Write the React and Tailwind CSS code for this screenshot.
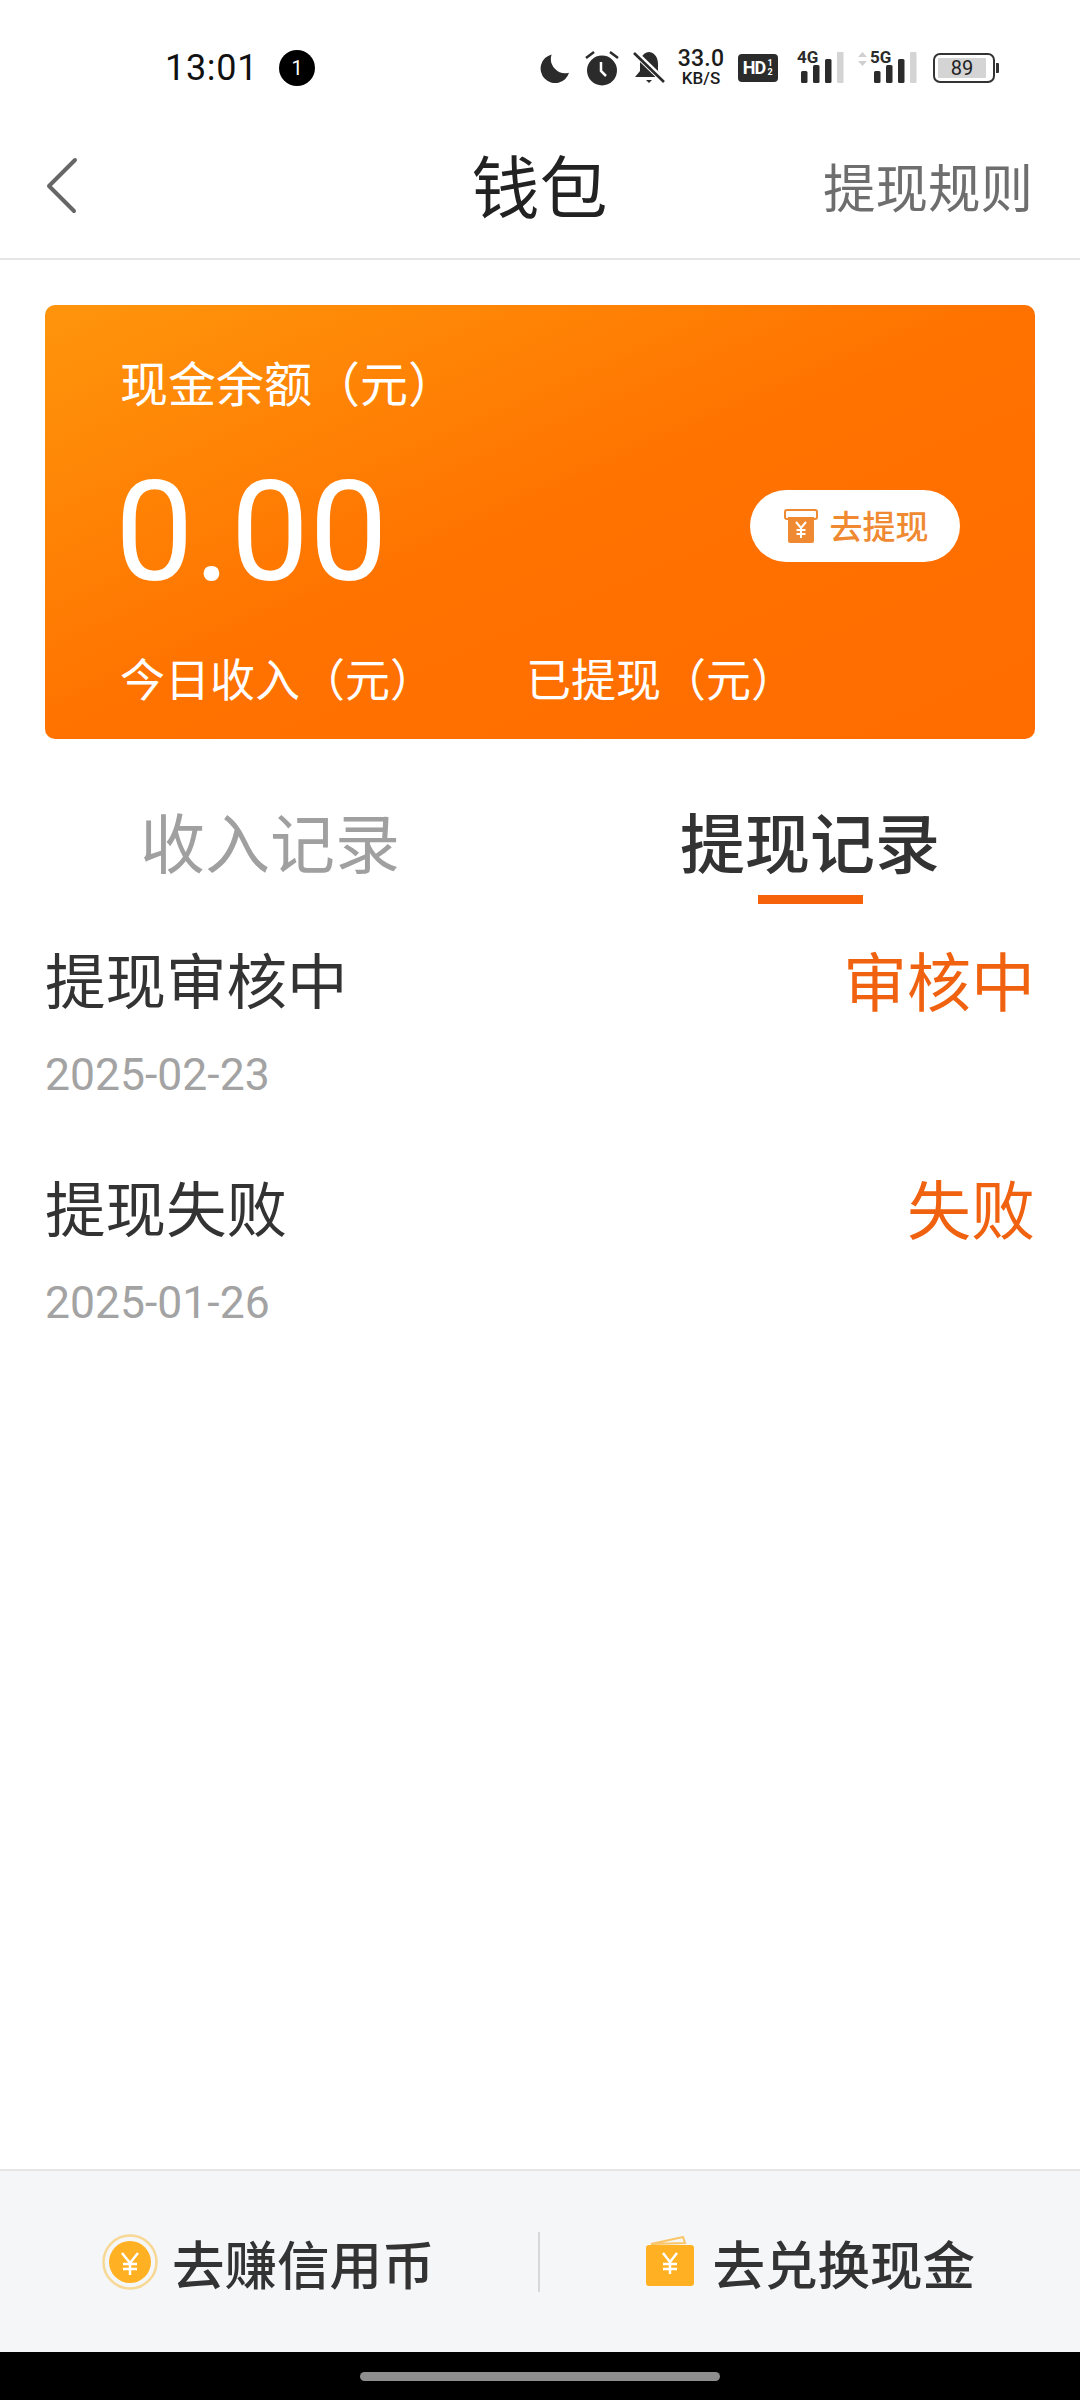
const cjk = { fontFamily: '"Noto Sans CJK SC", Roboto, sans-serif' };

function Bars() {
  return (
    <svg width="44" height="32" viewBox="0 0 44 32">
      <rect x="0" y="19" width="6.5" height="12" rx="1.5" fill="#2b2b2b" />
      <rect x="12" y="13" width="6.5" height="18" rx="1.5" fill="#2b2b2b" />
      <rect x="24" y="7" width="6.5" height="24" rx="1.5" fill="#2b2b2b" />
      <rect x="36" y="0" width="6.5" height="31" rx="1" fill="#d4d4d4" />
    </svg>
  );
}

function StatusBar() {
  return (
    <div className="h-[130px] flex items-center pl-[165px] pr-[81px] pt-[6px] text-[#111]" style={{ fontFamily: 'Roboto, sans-serif' }}>
      <span className="text-[36px] leading-none tracking-[0.7px] w-[112px]">13:01</span>
      <span className="ml-[2px] w-[36px] h-[36px] rounded-full bg-black text-white text-[20px] flex items-center justify-center">1</span>
      <div className="ml-auto flex items-center">
        <svg width="31" height="32" viewBox="0 0 32 32"><path d="M13 2 A15 15 0 1 0 31 21 A15 15 0 0 1 13 2Z" fill="#2b2b2b" /></svg>
        <svg className="ml-[15px]" width="34" height="36" viewBox="0 0 34 36">
          <circle cx="17" cy="20.5" r="15" fill="#2b2b2b" />
          <path d="M16 12 V21 L21 26" stroke="#fff" strokeWidth="2.5" fill="none" />
          <path d="M1 8 L9 2 M33 8 L25 2" stroke="#2b2b2b" strokeWidth="2.5" />
        </svg>
        <svg className="ml-[14px]" width="32" height="36" viewBox="0 0 32 36">
          <path d="M16 2 C9 3 7 9 7 14 V21 L2 27 H30 L25 21 V14 C25 9 23 3 16 2Z" fill="#2b2b2b" />
          <path d="M13 30 H19 L16 33Z" fill="#2b2b2b" />
          <path d="M1 2 L31 31" stroke="#fff" strokeWidth="6" />
          <path d="M1 3 L31 32" stroke="#2b2b2b" strokeWidth="2.6" />
        </svg>
        <div className="ml-[10px] w-[52px] flex flex-col items-center text-[#1c1c1c] font-medium">
          <span className="text-[23px] leading-[21px] tracking-[0.2px]">33.0</span>
          <span className="text-[17px] leading-[19px]">KB/S</span>
        </div>
        <div className="ml-[11px] w-[40px] h-[28px] rounded-[4px] bg-[#2b2b2b] text-white text-[18px] leading-none font-bold flex items-center justify-center tracking-[-1px]">HD<span className="text-[9px] leading-[9px] w-[7px] text-center ml-[1px]">1<br />2</span></div>
        <div className="ml-[19px] relative w-[46px] h-[32px]">
          <span className="absolute left-0 -top-[3px] text-[17px] font-bold text-[#2b2b2b] leading-none">4G</span>
          <div className="absolute left-[4px] bottom-0"><Bars /></div>
        </div>
        <div className="ml-[15px] relative w-[60px] h-[32px]">
          <svg className="absolute left-0 top-0" width="9" height="14" viewBox="0 0 9 14"><path d="M4.5 0 L9 5 H0Z M4.5 14 L9 9 H0Z" fill="#d0d0d0" /></svg>
          <span className="absolute left-[12px] -top-[3px] text-[17px] font-bold text-[#2b2b2b] leading-none">5G</span>
          <div className="absolute left-[16px] bottom-0"><Bars /></div>
        </div>
        <div className="ml-[15px] w-[62px] h-[30px] rounded-[7px] border-2 border-[#333] p-[3px] flex">
          <div className="w-[48px] bg-[#d4d4d4] rounded-[1px] text-[20px] leading-[20px] text-[#222] text-center">89</div>
        </div>
        <div className="ml-[1px] w-[3px] h-[10px] bg-[#333] rounded-r-[1px]" />
      </div>
    </div>
  );
}

function Header() {
  return (
    <div className="h-[130px] relative flex items-center justify-center border-b-2 border-[#e5e5e5] box-border" style={cjk}>
      <svg className="absolute left-[45px] top-[27px]" width="34" height="58" viewBox="0 0 34 58">
        <path d="M30 3 L4 29 L29 54" stroke="#666" strokeWidth="4" strokeLinecap="round" strokeLinejoin="round" fill="none" />
      </svg>
      <span className="text-[68px] leading-none text-[#222] -mt-[20px] -ml-[1px]">钱包</span>
      <span className="absolute right-[47px] top-[25px] text-[52.5px] leading-[60px] text-[#6e6e6e]">提现规则</span>
    </div>
  );
}

function Card() {
  return (
    <div className="mx-[45px] mt-[45px] h-[434px] rounded-[10px] bg-gradient-to-br from-[#ff950c] via-[#ff7200] to-[#ff6c00] text-white pl-[75px] pr-[75px] flex flex-col" style={cjk}>
      <div className="mt-[46px] text-[48px] leading-[60px]">现金余额（元）</div>
      <div className="flex items-center justify-between mt-[50px] h-[130px]">
        <span className="text-[140px] leading-none -ml-[5px] mt-[12px]" style={{ fontFamily: 'Roboto, sans-serif' }}>0.00</span>
        <div className="w-[210px] h-[72px] rounded-full bg-white flex items-center justify-center gap-[12px] text-[#f08a32] text-[33px] font-medium">
          <svg className="ml-[2px]" width="34" height="36" viewBox="0 0 34 36">
            <rect x="1" y="2" width="32" height="9" rx="2" fill="none" stroke="#f08a32" strokeWidth="2" />
            <path d="M4 9 H30 V33 a2 2 0 0 1 -2 2 H6 a2 2 0 0 1 -2 -2Z" fill="#f08a32" />
            <path d="M12 14 L17 20 L22 14 M17 20 V30 M12.5 22 H21.5 M12.5 26 H21.5" stroke="#fff" strokeWidth="2" fill="none" />
          </svg>
          <span>去提现</span>
        </div>
      </div>
      <div className="mt-[57px] flex text-[45px] leading-[60px]">
        <span className="w-[406px]">今日收入（元）</span>
        <span>已提现（元）</span>
      </div>
    </div>
  );
}

function Tabs() {
  return (
    <div className="flex mt-[61px] text-[65px] leading-[80px]" style={cjk}>
      <div className="w-[540px] flex justify-center text-[#a0a0a0]">收入记录</div>
      <div className="w-[540px] flex flex-col items-center text-[#333] font-medium">
        <span>提现记录</span>
        <div className="w-[105px] h-[9px] bg-[#f5620a] mt-[15px]" />
      </div>
    </div>
  );
}

function Row({ title, status, date, className }) {
  return (
    <div className={`px-[45px] ${className}`}>
      <div className="flex justify-between items-center h-[80px]" style={cjk}>
        <span className="text-[#333] text-[60.5px]">{title}</span>
        <span className="text-[#f0620f] text-[64px]">{status}</span>
      </div>
      <div className="mt-[32px] text-[44.5px] leading-[50px] text-[#a3a3a3]" style={{ fontFamily: 'Roboto, sans-serif' }}>{date}</div>
    </div>
  );
}

function Footer() {
  return (
    <div className="h-[183px] bg-[#f5f6f8] border-t-2 border-[#e5e5e5] flex items-center text-[52.5px] text-[#333] font-medium" style={cjk}>
      <div className="flex-1 flex items-center pl-[101px]">
        <svg width="58" height="58" viewBox="0 0 58 58">
          <circle cx="29" cy="29" r="26.5" fill="none" stroke="#f7d894" strokeWidth="2.5" />
          <circle cx="29" cy="29" r="21" fill="#ffb123" />
          <path d="M21 20 L29 30 L37 20 M29 30 V42 M22 31 H36 M22 36 H36" stroke="#fff" strokeWidth="2.5" fill="none" />
        </svg>
        <span className="ml-[13px] leading-[70px]">去赚信用币</span>
      </div>
      <div className="w-[2px] h-[60px] bg-[#d8d8d8] translate-x-[1px]" />
      <div className="flex-1 flex items-center pl-[106px]">
        <svg width="50" height="52" viewBox="0 0 50 52">
          <path d="M6 8 L38 1 L40 7Z" fill="none" stroke="#f9c567" strokeWidth="2" />
          <rect x="1" y="9" width="48" height="41" rx="3" fill="#ffb123" />
          <path d="M18 17 L25 26 L32 17 M25 26 V38 M18 28 H32 M18 33 H32" stroke="#fff" strokeWidth="2.5" fill="none" />
        </svg>
        <span className="ml-[18px] leading-[70px]">去兑换现金</span>
      </div>
    </div>
  );
}

export default function App() {
  return (
    <div className="w-[1080px] h-[2400px] bg-white flex flex-col overflow-hidden">
      <StatusBar />
      <Header />
      <Card />
      <Tabs />
      <Row title="提现审核中" status="审核中" date="2025-02-23" className="mt-[34px]" />
      <Row title="提现失败" status="失败" date="2025-01-26" className="mt-[66px]" />
      <div className="flex-1" />
      <Footer />
      <div className="h-[48px] bg-black flex items-center justify-center">
        <div className="w-[360px] h-[9px] rounded-full bg-[#8e8e8e] mt-[1px]" />
      </div>
    </div>
  );
}
